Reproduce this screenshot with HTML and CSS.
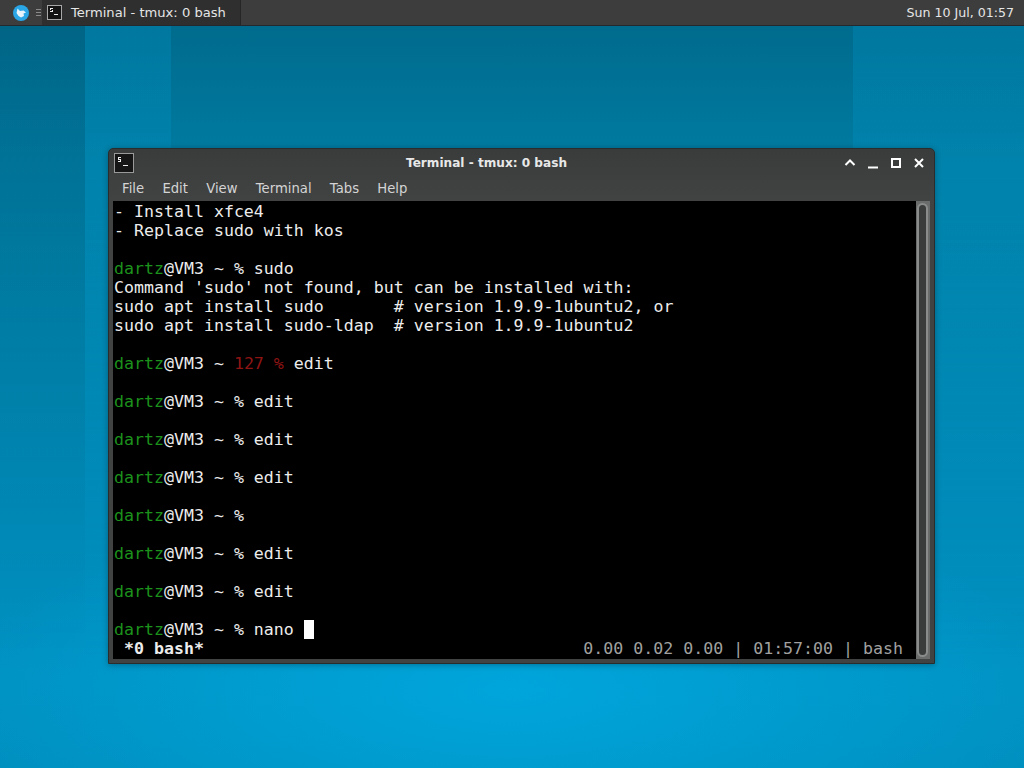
FILE: index.html
```html
<!DOCTYPE html>
<html lang="en">
<head>
<meta charset="utf-8">
<title>Terminal - tmux: 0 bash</title>
<link rel="stylesheet" href="styles.css">
</head>
<body>
<div class="desktop">
  <div class="bands"></div>
  <header class="panel">
    <div class="logo">
      <svg viewBox="0 0 16 16" width="16" height="16"><circle cx="8" cy="8" r="8" fill="#2aa5e6"/><path d="M3.5 8 L4.5 3.5 L7 6 L10.5 5.5 L13 7.5 L10.5 8.5 L11 11 L8 12.5 L5.5 11 Z" fill="#e8f4fb"/></svg>
    </div>
    <div class="handle"><i></i><i></i><i></i></div>
    <div class="task">
      <svg class="term-icon" viewBox="0 0 15 15" width="15" height="15"><rect x="0.5" y="0.5" width="14" height="14" fill="#151515" stroke="#a8a8a8"/><path d="M3 3h3v1H4v1h2v2H3V6h2V5H3zM7 9h4v1H7z" fill="#eee"/></svg>
      <span>Terminal - tmux: 0 bash</span>
    </div>
    <div class="clock">Sun 10 Jul, 01:57</div>
  </header>
  <section class="window">
    <div class="titlebar">
      <svg class="win-icon" viewBox="0 0 20 20" width="20" height="20"><rect x="0.5" y="0.5" width="19" height="19" fill="#161616" stroke="#9a9a9a"/><path d="M4 4h3v1H5v1h2v3H4V8h2V7H4zM9 12h5v1H9z" fill="#eee"/></svg>
      <div class="win-title">Terminal - tmux: 0 bash</div>
      <div class="win-buttons">
        <svg viewBox="0 0 12 12" width="12" height="12"><path d="M1.5 8 L6 3.5 L10.5 8" fill="none" stroke="#fff" stroke-width="2"/></svg>
        <svg viewBox="0 0 12 12" width="12" height="12"><path d="M1 10.5 H11" fill="none" stroke="#fff" stroke-width="2"/></svg>
        <svg viewBox="0 0 12 12" width="12" height="12"><rect x="2" y="2" width="8" height="8" fill="none" stroke="#fff" stroke-width="2"/></svg>
        <svg viewBox="0 0 12 12" width="12" height="12"><path d="M2 2 L10 10 M10 2 L2 10" fill="none" stroke="#fff" stroke-width="2"/></svg>
      </div>
    </div>
    <nav class="menubar">
      <span>File</span><span>Edit</span><span>View</span><span>Terminal</span><span>Tabs</span><span>Help</span>
    </nav>
    <div class="content">
      <pre class="term">- Install xfce4
- Replace sudo with kos

<span class="g">dartz</span>@VM3 ~ % sudo
Command 'sudo' not found, but can be installed with:
sudo apt install sudo       # version 1.9.9-1ubuntu2, or
sudo apt install sudo-ldap  # version 1.9.9-1ubuntu2

<span class="g">dartz</span>@VM3 ~ <span class="r">127 %</span> edit

<span class="g">dartz</span>@VM3 ~ % edit

<span class="g">dartz</span>@VM3 ~ % edit

<span class="g">dartz</span>@VM3 ~ % edit

<span class="g">dartz</span>@VM3 ~ %

<span class="g">dartz</span>@VM3 ~ % edit

<span class="g">dartz</span>@VM3 ~ % edit

<span class="g">dartz</span>@VM3 ~ % nano <span class="cursor"> </span>
<span class="status"><b> *0 bash*</b><span class="status-right">0.00 0.02 0.00 | 01:57:00 | bash </span></span></pre>
      <div class="scrollbar"><div class="thumb"></div></div>
    </div>
  </section>
</div>
</body>
</html>
```
FILE: styles.css
```css
* { box-sizing: border-box; }
html, body { margin: 0; height: 100%; }
body { overflow: hidden; font-family: "DejaVu Sans", sans-serif; }
.desktop {
  position: relative;
  width: 1024px;
  height: 768px;
  background:
    radial-gradient(ellipse 560px 190px at 50% 690px, rgba(0,172,228,.75), rgba(0,172,228,0)),
    linear-gradient(180deg, #006b8d 26px, #007aa0 150px, #0082aa 300px, #008ab8 500px, #0092c2 680px, #0090c0 768px);
  overflow: hidden;
}
.bands {
  position: absolute;
  inset: 26px 0 0 0;
  background: linear-gradient(90deg, rgba(0,60,85,.12) 0, rgba(0,60,85,.12) 85px, rgba(0,150,200,.3) 85px, rgba(0,150,200,.3) 171px, rgba(0,150,200,0) 171px, rgba(0,150,200,0) 853px, rgba(0,150,200,.3) 853px, rgba(0,150,200,.3) 100%);
  -webkit-mask-image: linear-gradient(180deg, #000 0, #000 20%, transparent 85%);
  mask-image: linear-gradient(180deg, #000 0, #000 20%, transparent 85%);
}
.panel {
  position: relative;
  display: flex;
  align-items: center;
  height: 26px;
  background: #3d3d3d;
  border-bottom: 1px solid #23292d;
  color: #e6e6e6;
  font-size: 13.1px;
}
.logo { display: flex; width: 16px; margin-left: 13px; }
.handle { display: flex; flex-direction: column; gap: 2px; width: 5px; margin-left: 7px; }
.handle i { display: block; height: 1px; background: #8a8a8a; }
.task {
  display: flex;
  align-items: center;
  gap: 9px;
  width: 199px;
  height: 25px;
  margin-left: 1px;
  padding-left: 5px;
  background: #2f2f2f;
  border-right: 1px solid #262626;
  margin-right: auto;
}
.clock { padding-right: 10px; font-size: 12.6px; }
.window {
  position: absolute;
  left: 108px;
  top: 148px;
  width: 827px;
  height: 516px;
  display: flex;
  flex-direction: column;
  background: linear-gradient(180deg, #3a3c3c 0, #414343 50px);
  border: 1px solid #2a2d2e;
  border-radius: 5px 5px 0 0;
  box-shadow: 0 1px 6px rgba(0,0,0,.3);
}
.titlebar { display: flex; align-items: center; height: 27px; padding: 0 9px 0 5px; flex: none; }
.win-icon { flex: none; }
.win-title {
  flex: 1;
  padding-right: 5px;
  text-align: center;
  font-size: 12.1px;
  font-weight: 700;
  color: #e8e8e8;
}
.win-buttons { display: flex; gap: 11px; }
.menubar {
  display: flex;
  gap: 18.3px;
  height: 25px;
  flex: none;
  align-items: center;
  padding: 0 0 0 13px;
  color: #d4d4d4;
  font-size: 13.2px;
}
.content { flex: 1; display: flex; min-height: 0; padding: 0 4px 4px 4px; }
.term {
  flex: 1;
  margin: 0;
  padding: 1px 0 0 1px;
  background: #000;
  color: #ececec;
  font-family: "DejaVu Sans Mono", monospace;
  font-size: 16.6px;
  line-height: 19px;
  overflow: hidden;
  white-space: pre;
}
.g { color: #1c921c; }
.r { color: #8e1414; }
.cursor { display: inline-block; width: 10px; height: 19px; background: #fff; vertical-align: top; }
.status { display: flex; justify-content: space-between; }
.status b { color: #ececec; }
.status-right { color: #a0a0a0; padding-right: 3px; }
.scrollbar {
  width: 14px;
  flex: none;
  background: #6a6c6c;
  padding: 2px 2px 2px 1px;
}
.thumb { height: 100%; background: #3a3c3c; border: 2px solid #8a8c8c; border-radius: 6px; }
```
